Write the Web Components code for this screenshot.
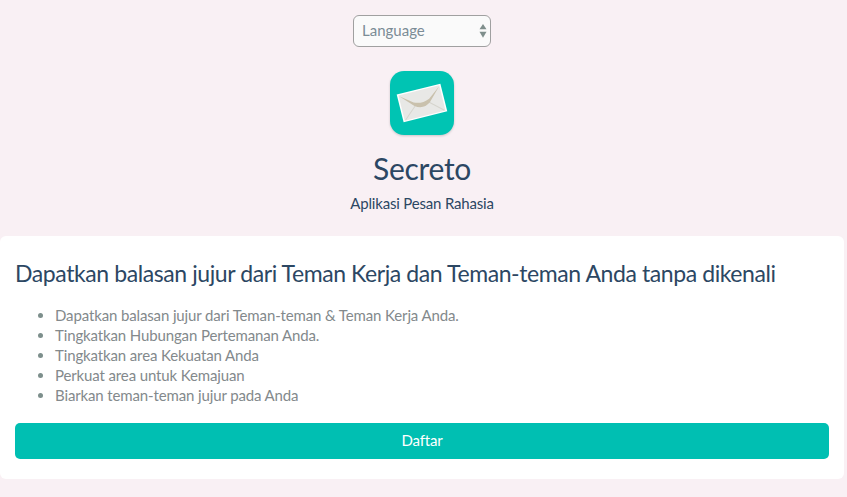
<!DOCTYPE html>
<html>
<head>
<meta charset="utf-8">
<title>Secreto</title>
<style>
    html, body { margin: 0; background: #f9f0f4; }
    body { font-family: Lato, "Noto Sans", sans-serif; color: #2c4763; }
</style>
</head>
<body>
<secreto-page></secreto-page>

<script>
class LanguageSelect extends HTMLElement {
    constructor() {
        super();
        this.attachShadow({ mode: 'open' });
        this.shadowRoot.innerHTML = `
            <style>
                :host { display: block; width: 138px; height: 32px; box-sizing: border-box; }
                .box {
                    height: 100%;
                    box-sizing: border-box;
                    display: flex;
                    align-items: center;
                    justify-content: space-between;
                    padding: 0 3px 0 8px;
                    border: 1px solid #a0a0a0;
                    border-radius: 6px;
                    background: #fafafa;
                    color: #7b8c96;
                    font-size: 15px;
                }
                span { margin-bottom: 2px; }
                svg { display: block; }
            </style>
            <div class="box">
                <span><slot></slot></span>
                <svg width="8" height="16" viewBox="0 0 8 16">
                    <path d="M4 1 L7.5 6.2 H0.5 Z" fill="#7f8f8c"/>
                    <path d="M4 14.8 L7.5 8.8 H0.5 Z" fill="#7f8f8c"/>
                </svg>
            </div>
        `;
    }
}

class AppLogo extends HTMLElement {
    constructor() {
        super();
        this.attachShadow({ mode: 'open' });
        this.shadowRoot.innerHTML = `
            <style>
                :host { display: block; width: 64px; height: 64px; }
                svg { display: block; filter: drop-shadow(0 1px 1px rgba(0,0,0,.18)); }
            </style>
            <svg width="64" height="64" viewBox="0 0 64 64">
                <rect width="64" height="64" rx="14" fill="#00c4b3"/>
                <g transform="rotate(-14 32 32)">
                    <rect x="9.5" y="17.7" width="45" height="28.5" fill="#ffffff"/>
                    <rect x="11" y="19" width="42" height="26" fill="#e8e8e6"/>
                    <path d="M12 44.5 L26 32 M52 44.5 L38 32" stroke="#d6d5ce" stroke-width="1" fill="none"/>
                    <path d="M11.5 20 L24 33 Q32 39 40 33 L52.5 20 L40 29.5 Q32 33 24 29.5 Z" fill="#c9c1ad"/>
                </g>
            </svg>
        `;
    }
}

class InfoCard extends HTMLElement {
    constructor() {
        super();
        this.attachShadow({ mode: 'open' });
        this.shadowRoot.innerHTML = `
            <style>
                :host {
                    display: block;
                    margin-right: 3px;
                    padding: 20px 15px 20px;
                    background: #fff;
                    border-radius: 6px;
                }
                h2 {
                    margin: 0 0 15px;
                    font-size: 23px;
                    letter-spacing: -0.41px;
                    line-height: 34px;
                    font-weight: 400;
                    color: #2c4763;
                }
            </style>
            <h2><slot name="title"></slot></h2>
            <slot></slot>
            <slot name="action"></slot>
        `;
    }
}

class PointList extends HTMLElement {
    constructor() {
        super();
        this.attachShadow({ mode: 'open' });
        this.shadowRoot.innerHTML = `
            <style>
                :host { display: block; margin-bottom: 18px; }
                ul {
                    margin: 0;
                    padding: 0 0 0 40px;
                    list-style: disc;
                    color: #7d8f8c;
                    font-size: 15px;
                    letter-spacing: -0.13px;
                    line-height: 20px;
                }
                li span { color: #83898c; }
            </style>
            <ul>
                <li><span>Dapatkan balasan jujur dari Teman-teman &amp; Teman Kerja Anda.</span></li>
                <li><span>Tingkatkan Hubungan Pertemanan Anda.</span></li>
                <li><span>Tingkatkan area Kekuatan Anda</span></li>
                <li><span>Perkuat area untuk Kemajuan</span></li>
                <li><span>Biarkan teman-teman jujur pada Anda</span></li>
            </ul>
        `;
    }
}

class SignupButton extends HTMLElement {
    constructor() {
        super();
        this.attachShadow({ mode: 'open' });
        this.shadowRoot.innerHTML = `
            <style>
                :host {
                    display: flex;
                    align-items: center;
                    justify-content: center;
                    box-sizing: border-box;
                    height: 36px;
                    padding-bottom: 2px;
                    background: #00bfb2;
                    border-radius: 5px;
                    color: #fff;
                    font-size: 15px;
                    letter-spacing: -0.2px;
                }
            </style>
            <slot></slot>
        `;
    }
}

class SecretoPage extends HTMLElement {
    constructor() {
        super();
        this.attachShadow({ mode: 'open' });
        this.shadowRoot.innerHTML = `
            <style>
                :host { display: block; }
                header {
                    display: flex;
                    flex-direction: column;
                    align-items: center;
                    padding-top: 15px;
                    margin-right: 3px;
                    height: 236px;
                    box-sizing: border-box;
                }
                app-logo { margin-top: 24px; }
                h1 {
                    margin: 12px 0 0;
                    font-size: 30px;
                    letter-spacing: -0.3px;
                    line-height: 42px;
                    font-weight: 400;
                    color: #2c4763;
                }
                p {
                    margin: 2px 0 0;
                    font-size: 15px;
                    letter-spacing: -0.18px;
                    line-height: 24px;
                    color: #2c4763;
                }
            </style>
            <header>
                <language-select>Language</language-select>
                <app-logo></app-logo>
                <h1>Secreto</h1>
                <p>Aplikasi Pesan Rahasia</p>
            </header>
            <info-card>
                <span slot="title">Dapatkan balasan jujur dari Teman Kerja dan Teman-teman Anda tanpa dikenali</span>
                <point-list></point-list>
                <signup-button slot="action">Daftar</signup-button>
            </info-card>
        `;
    }
}

customElements.define('language-select', LanguageSelect);
customElements.define('app-logo', AppLogo);
customElements.define('info-card', InfoCard);
customElements.define('point-list', PointList);
customElements.define('signup-button', SignupButton);
customElements.define('secreto-page', SecretoPage);
</script>
</body>
</html>
